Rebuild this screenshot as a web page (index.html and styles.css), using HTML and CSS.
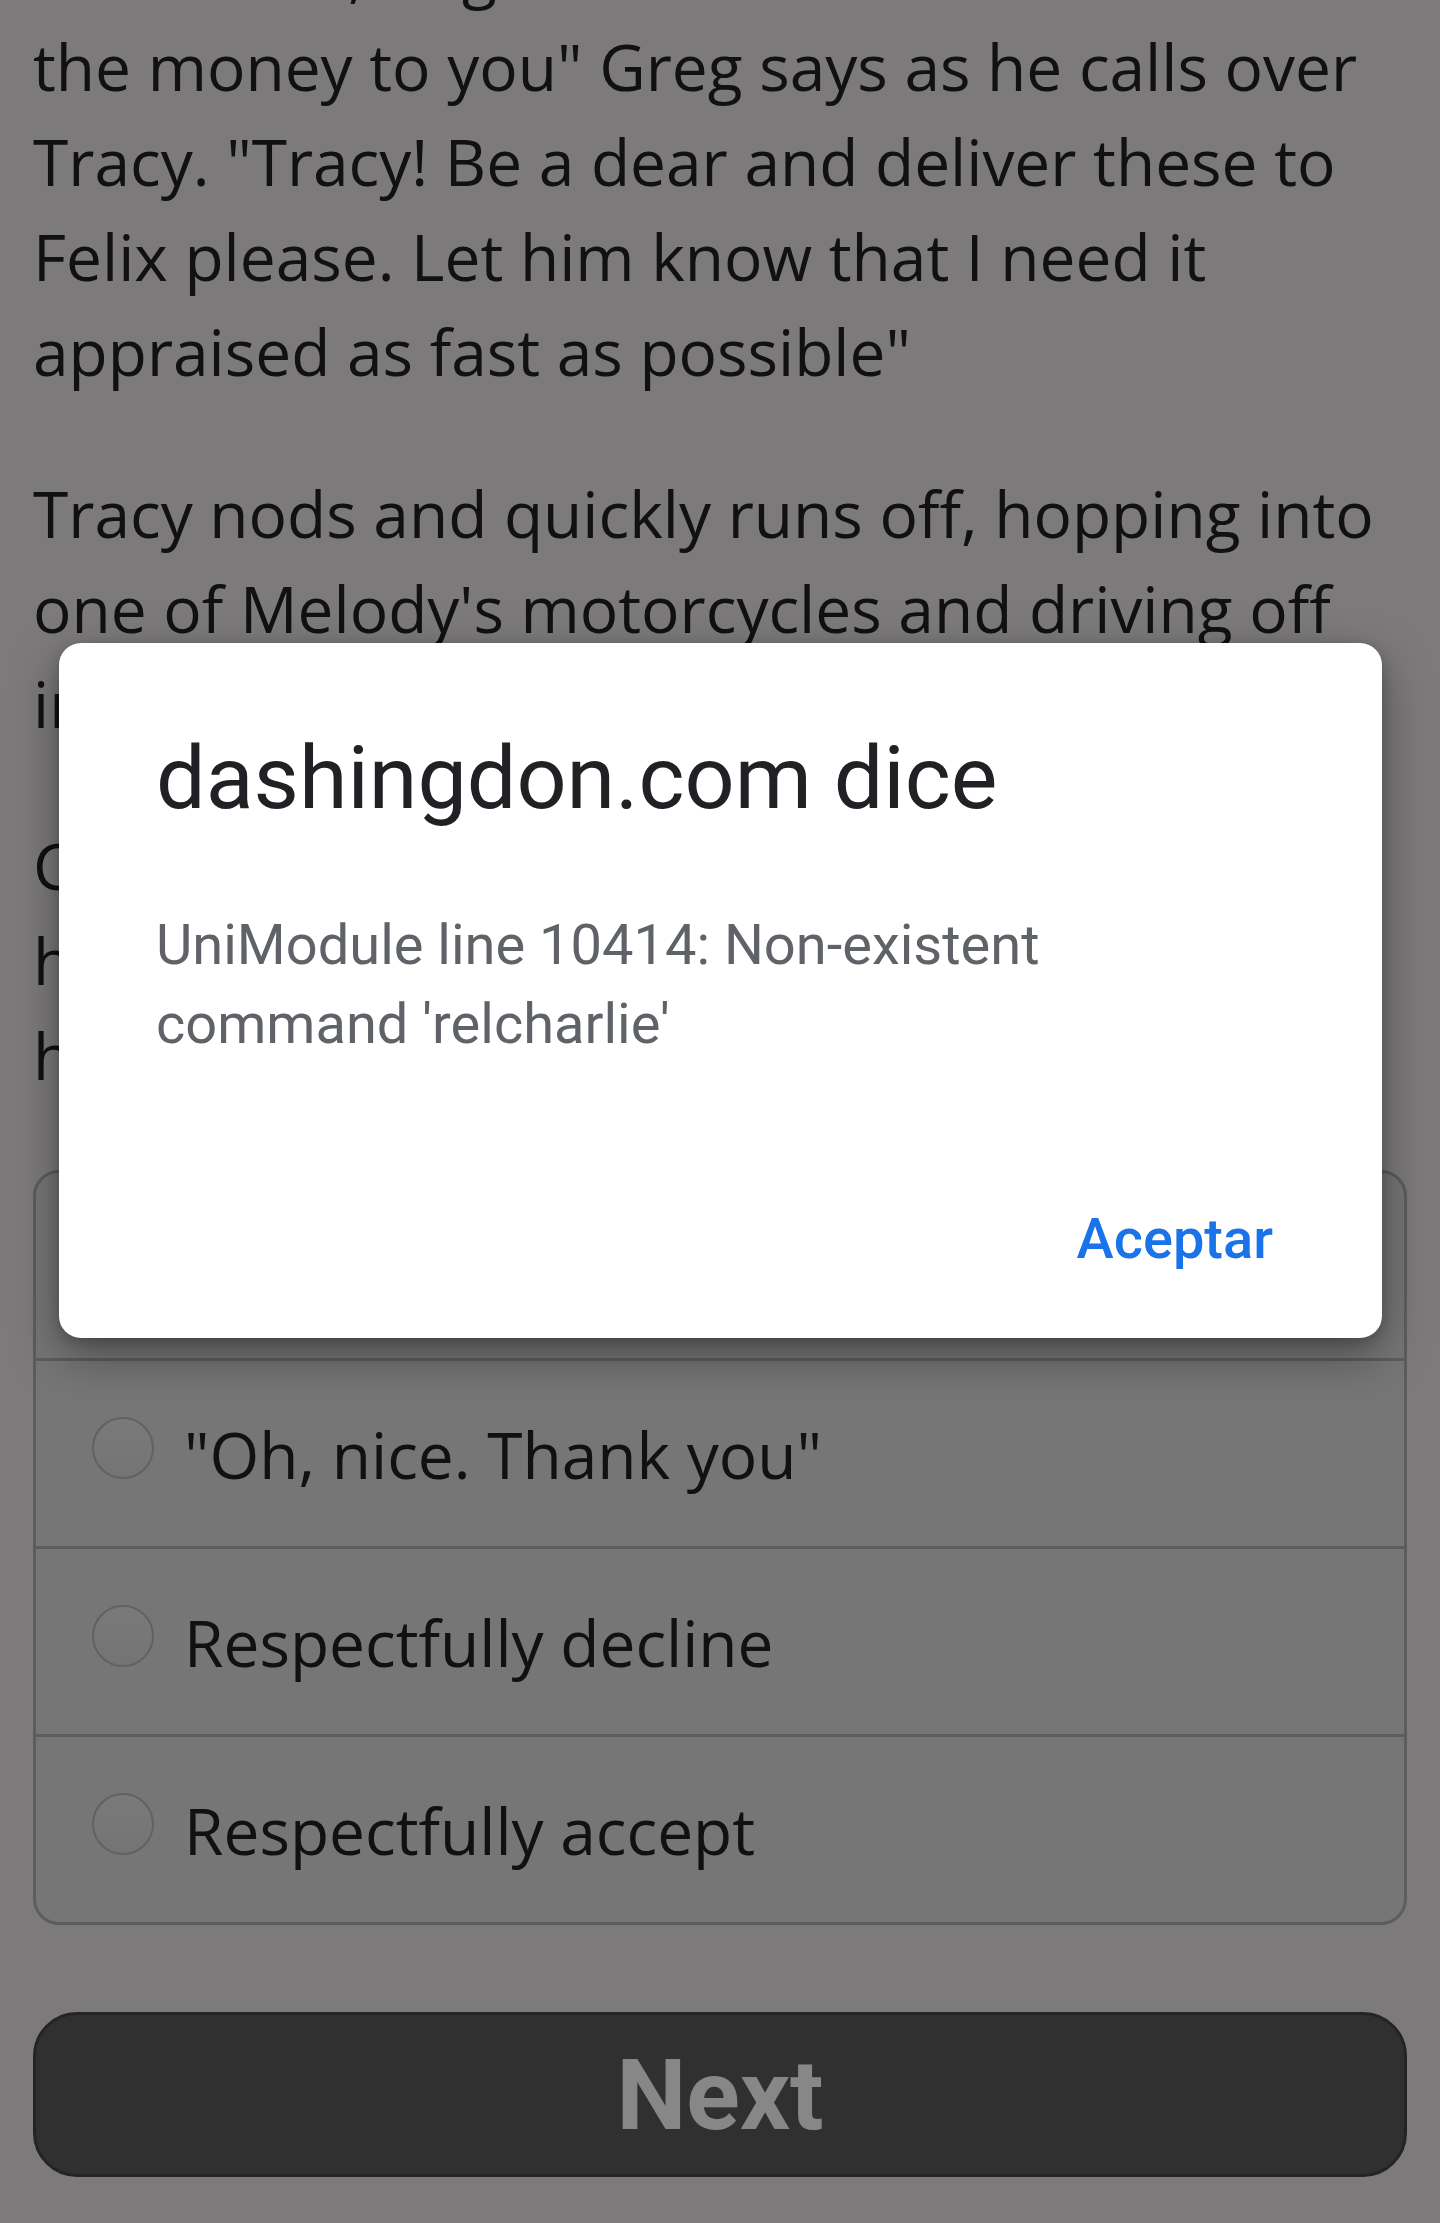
FILE: index.html
```html
<!DOCTYPE html>
<html lang="en">
<head>
    <meta charset="UTF-8">
    <meta name="viewport" content="width=device-width, initial-scale=1.0">
    <title>Dashingdon</title>
    <link rel="stylesheet" href="styles.css">
</head>
<body>

    <div class="story">
        <p>Wonderful, I'll get these checked and send<br>the money to you" Greg says as he calls over Tracy. "Tracy! Be a dear and deliver these to Felix please. Let him know that I need it appraised as fast as possible"</p>

        <p>Tracy nods and quickly runs off, hopping into one of Melody's motorcycles and driving off into the city with the bag.</p>

        <p>Charlie turns back to you with a grin,<br>his hand held out with a thick envelope<br>half full of crisp bills. "For you."</p>
    </div>

    <form class="choices">
        <label class="choice">
            <span class="radio"></span>
            <span class="choice-text">"I'll take it, thanks"</span>
        </label>
        <label class="choice">
            <span class="radio"></span>
            <span class="choice-text">"Oh, nice. Thank you"</span>
        </label>
        <label class="choice">
            <span class="radio"></span>
            <span class="choice-text">Respectfully decline</span>
        </label>
        <label class="choice">
            <span class="radio"></span>
            <span class="choice-text">Respectfully accept</span>
        </label>
    </form>

    <div class="next-wrap">
        <button class="next-btn" type="button">Next</button>
    </div>

    <div class="scrim"></div>

    <div class="dialog">
        <h2 class="dialog-title">dashingdon.com dice</h2>
        <p class="dialog-msg">UniModule line 10414: Non-existent command 'relcharlie'</p>
        <div class="dialog-actions">
            <button class="dialog-btn" type="button">Aceptar</button>
        </div>
    </div>

</body>
</html>
```

FILE: styles.css
```css
* {
    margin: 0;
    padding: 0;
    box-sizing: border-box;
}

body {
    font-family: "Open Sans", "Noto Sans", sans-serif;
    background-color: #ebe7e6;
    color: #202020;
    width: 1440px;
    height: 2223px;
    overflow: hidden;
    position: relative;
}

.story {
    padding: 0 33px;
    margin-top: -76px;
}

.story p {
    font-size: 64px;
    line-height: 95px;
    margin-bottom: 67px;
}

.choices {
    margin: 9px 33px 0;
    border: 3px solid #b0b0b0;
    border-radius: 26px;
    background-color: #dfdfdf;
    overflow: hidden;
}

.choice {
    display: flex;
    align-items: flex-start;
    padding: 46px 0 44px 56px;
    border-top: 3px solid #b0b0b0;
}

.choice:first-child {
    border-top: none;
}

.radio {
    flex: none;
    width: 62px;
    height: 62px;
    margin-top: 10px;
    border-radius: 50%;
    border: 2px solid #b8b8b8;
    background: linear-gradient(#e6e6e6, #e2e2e2 30%, #dcdcdc);
}

.choice-text {
    margin-left: 30px;
    font-size: 64px;
    line-height: 95px;
}

.next-wrap {
    padding: 87px 33px 0;
}

.next-btn {
    display: block;
    width: 100%;
    height: 165px;
    border: 3px solid #454545;
    border-radius: 44px;
    background-color: #5b5b5b;
    color: #fff;
    font-family: Roboto, "Liberation Sans", sans-serif;
    font-weight: bold;
    font-size: 99px;
}

/* alert overlay */
.scrim {
    position: absolute;
    top: 0;
    left: 0;
    width: 100%;
    height: 100%;
    background-color: rgba(0, 0, 0, 0.47);
}

.dialog {
    position: absolute;
    top: 643px;
    left: 59px;
    width: 1323px;
    height: 695px;
    background-color: #fff;
    border-radius: 22px;
    box-shadow: 0 18px 50px rgba(0, 0, 0, 0.35), 0 4px 14px rgba(0, 0, 0, 0.2);
    padding: 83px 109px 0 97px;
    font-family: Roboto, "Liberation Sans", sans-serif;
}

.dialog-title {
    font-size: 88px;
    font-weight: normal;
    line-height: 104px;
    color: #202124;
}

.dialog-msg {
    margin-top: 76px;
    font-size: 56px;
    line-height: 79px;
    color: #5f6368;
}

.dialog-actions {
    display: flex;
    justify-content: flex-end;
    margin-top: 136px;
}

.dialog-btn {
    border: none;
    background: none;
    font-family: Roboto, "Liberation Sans", sans-serif;
    font-weight: 500;
    font-size: 56px;
    line-height: 79px;
    color: #1a73e8;
}
```
